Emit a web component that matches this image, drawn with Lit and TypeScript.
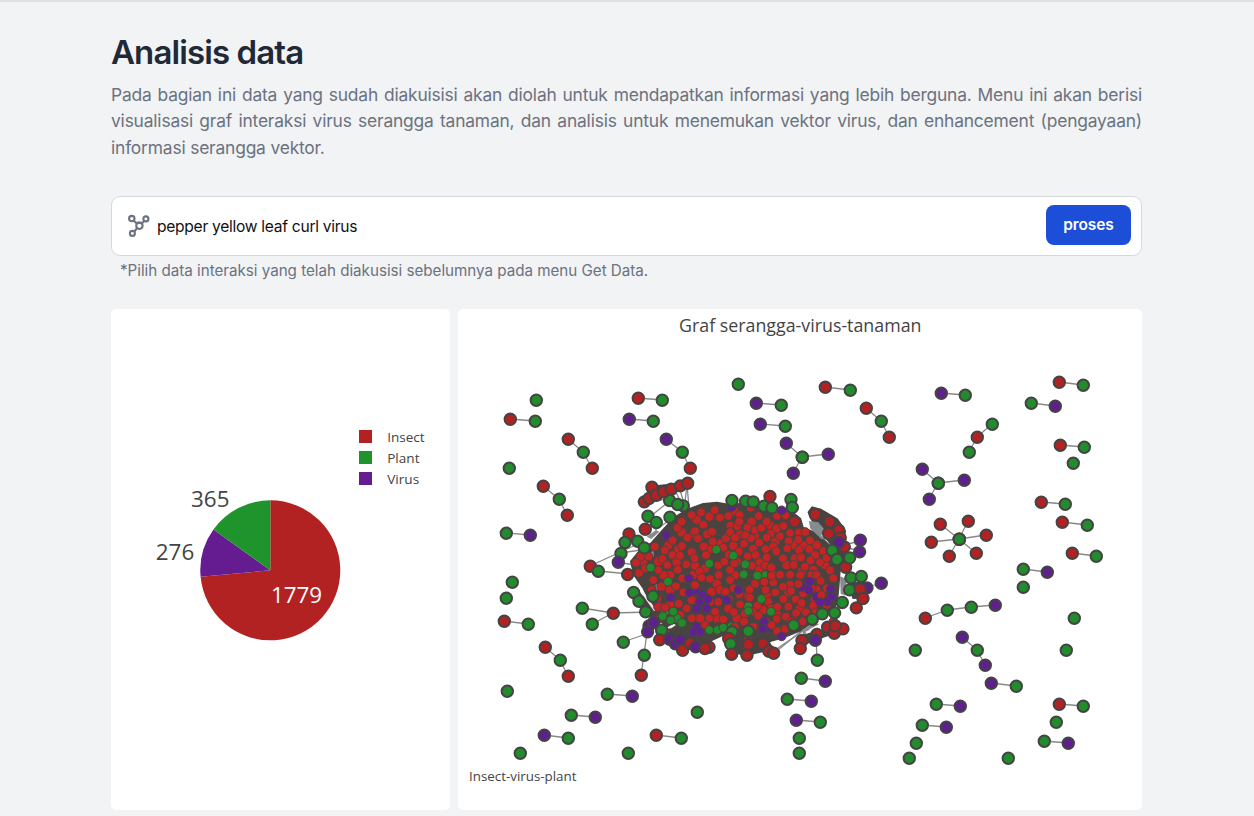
import { LitElement, html, css, svg } from "lit";
import { customElement } from "lit/decorators.js";

type Kind = "r" | "g" | "p";
type Node = [Kind, number, number];

const FILL: Record<Kind, string> = { r: "#b22222", g: "#228b2c", p: "#5f1f8c" };
const HUB_FILL: Record<Kind, string> = { r: "#c42424", g: "#228b2c", p: "#5f2190" };

/** "r510,419 g535,421" -> nodes */
const parse = (s: string): Node[] =>
  s.trim().split(/\s+/).map((t) => {
    const [x, y] = t.slice(1).split(",").map(Number);
    return [t[0] as Kind, x, y];
  });

// Small components; consecutive nodes are linked.
const CHAINS = [
  "g536,400", "r510,419 g535,421", "r568,439 g583,452 r592,468", "g509,468",
  "r543,486 g559,499 r567,515", "g506,533 p530,535", "g512,582", "g506,598",
  "r504,621 g528,624", "r545,647 g560,660 r568,676", "g507,691", "g607,694 p632,696",
  "g571,715 p595,717", "p544,735 g568,738", "g520,753", "g628,753", "g697,712",
  "r656,735 g681,738", "r638,398 g662,400", "p629,419 g653,421",
  "p666,439 g682,452 r690,468", "g738,384", "p756,403 g781,405", "p760,424 g785,426",
  "p786,443 g802,457 p828,454", "g802,457 p793,473", "r825,387 g850,390",
  "r866,408 g881,421 r889,437", "p941,393 g965,395", "r1059,382 g1083,385",
  "g1031,403 p1055,406", "g992,424 r977,437 g969,452", "r1060,445 g1084,447", "g1073,463",
  "p922,469 g938,483 p964,480", "g938,483 p929,499", "r1041,502 g1065,504",
  "r1062,522 g1087,525", "r940,524 g959,539 r976,553", "r968,521 g959,539 r949,556",
  "r931,542 g959,539 r986,535", "r1072,553 g1096,556", "g1023,569 p1047,572", "g1023,587",
  "r925,618 g947,610 g971,607 p995,605", "g1074,618", "g1066,650", "g915,650",
  "p962,637 g977,650 p985,665", "p991,683 g1016,686", "g936,704 p960,706",
  "g922,725 p946,727", "g916,743", "g909,758", "g1008,758", "r1059,704 g1083,706",
  "g1056,722", "g1044,741 p1068,743", "g801,678 p825,681", "g787,699 p811,701",
  "p796,720 g820,722", "g799,738", "g799,753",
].map(parse);

// Arms that reach out from the hub.
const ARM_LINKS: number[][] = [
  [590, 566, 640, 543], [598, 571, 640, 575], [582, 608, 613, 613], [592, 624, 613, 613],
  [613, 613, 650, 612], [623, 642, 652, 632], [647, 632, 644, 655], [644, 655, 641, 675],
  [816, 636, 817, 660], [840, 546, 860, 541], [840, 546, 860, 551], [881, 583, 858, 590],
  [620, 553, 655, 548], [618, 562, 650, 568], [651, 502, 670, 498], [675, 490, 683, 507],
  [680, 490, 686, 510], [687, 484, 684, 512], [687, 484, 690, 520], [773, 654, 805, 628],
  [778, 648, 812, 625], [666, 504, 652, 515], [670, 520, 655, 530],
];
const ARMS = parse("r590,566 g598,571 g582,608 g592,624 r613,613 g623,642 g644,655 r641,675 g817,660 p881,583");

// The hub is plotted on a grid three times finer than the page.
const HUB_BLOB =
  "M128,168 L165,128 L205,104 L250,88 L290,84 L335,92 L380,84 L440,98 L505,104 L540,132 L548,160 L590,176 L625,210 L640,240 L660,262 L654,340 L650,380 L640,402 L590,430 L540,466 L490,486 L440,500 L330,490 L310,478 L262,500 L215,496 L190,478 L150,470 L120,430 L98,410 L88,375 L72,340 L44,300 L34,260 L60,228 L95,205 Z";
const HUB_SHAPES = [
  "M567,112 L577,98 L600,104 L650,133 L674,168 L670,200 L678,235 L672,276 L650,270 L640,215 L612,178 L577,134 Z",
  "M26,350 L50,345 L98,404 L116,426 L80,420 Z",
  "M72,80 L95,36 L202,24 L150,50 L80,84 Z",
  "M694,330 L730,318 L735,366 L700,368 Z",
  "M535,516 L550,482 L670,454 L640,474 L580,494 Z",
  "M312,488 L440,490 L460,530 L440,525 L380,538 L330,530 Z",
  "M130,475 L262,475 L266,510 L187,524 Z",
];
const HUB_GAPS = [
  "M567,138 L595,142 L612,162 L604,182 L624,194 L604,192 L570,160 Z",
  "M80,185 L108,165 L118,170 L94,192 Z",
  "M660,304 L680,312 L676,362 L662,356 Z",
  "M545,465 L575,448 L600,446 L570,462 L552,482 Z",
  "M88,238 L100,226 L102,246 Z", "M106,330 L116,326 L118,345 L110,346 Z",
];
const HUB_WHITE = [
  "M62,352 L72,352 L108,405 L102,408 Z", "M134,462 L160,446 L168,450 L154,460 Z",
  "M556,470 L600,452 L590,462 L560,476 Z",
];

// Nodes mostly hidden beneath their neighbours.
const HUB_UNDER = parse(`
r230,135 r268,125 r345,110 r395,140 r450,150 r470,160 r262,178 r220,175 r185,172 r360,178 r405,185 r465,200
r300,205 r252,215 r215,232 r275,222 r340,212 r400,222 r460,215 r520,210 r550,212 r590,210 r145,212 r175,222
r170,262 r225,272 r255,280 r350,260 r420,262 r500,270 r525,250 r585,240 r580,285 r615,270 r545,290 r460,300
r435,300 r345,300 r290,325 r220,300 r150,300 r130,300 r115,260 r70,260 r62,245 r125,335 r150,345 r275,350
r300,345 r385,365 r440,362 r510,330 r550,355 r585,370 r590,345 r575,300 r505,352 r470,415 r430,405 r350,430
r290,430 r325,400 r310,370 r270,380 r215,375 r150,390 r115,395 r180,420 r240,430 r375,415 r520,440 r540,400
p262,372 p225,345 p300,375 p445,455 p545,335 p590,365 p460,395 g135,410 g335,455 g430,300 g170,430 g385,395`);

const HUB_DOTS = parse(`
r215,120 r243,112 r284,105 r325,123 r359,120 r392,98 r416,123 r471,122 r172,158 r250,149 r276,170
r300,128 r331,152 r352,154 r382,158 r405,165 r424,159 r452,176 r490,153 r497,121 r510,174 r537,172
r158,196 r202,188 r234,191 r278,200 r318,190 r330,171 r345,188 r372,206 r393,190 r418,203 r440,188
r480,184 r506,198 r535,194 r570,196 r556,171 r104,215 r134,226 r157,240 r186,213 r180,242 r224,250
r258,240 r310,218 r326,239 r357,229 r383,244 r407,240 r440,247 r437,222 r469,229 r489,250 r502,220
r537,225 r568,222 r610,228 r86,245 r48,263 r127,252 r142,270 r115,285 r173,284 r199,268 r239,290
r295,271 r313,260 r330,285 r343,265 r396,272 r417,285 r436,272 r454,278 r480,299 r510,299 r521,270
r555,275 r543,247 r571,256 r600,262 r620,248 r630,286 r590,300 r602,318 r640,310 r57,294 r100,315
r76,280 r168,334 r187,310 r245,308 r270,312 r296,300 r316,350 r341,340 r330,315 r358,358 r389,344
r405,326 r433,320 r437,345 r460,322 r466,352 r489,335 r490,372 r513,348 r527,373 r535,327 r541,300
r545,384 r605,360 r620,340 r95,345 r112,370 r135,397 r176,386 r190,352 r200,400 r225,330 r285,410
r295,381 r326,372 r341,411 r360,388 r372,440 r412,392 r398,410 r390,368 r445,380 r454,400 r472,396
r470,432 r497,425 r505,395 r528,414 r558,412 r580,392 r587,412 r310,433 r268,430 r415,422 r438,440
r400,455 r345,455 r472,468 r495,462 r512,440 r548,440 r120,430 r160,410 r215,430 r255,450 r385,490
r640,440 r620,390 r575,340 r455,450 r455,302 r375,180 r225,168 r185,140 r358,140 r440,140
g289,224 g340,242 g268,266 g376,268 g371,298 g412,302 g92,278 g144,320 g424,372 g453,410 g385,408
g160,410 g128,424 g152,436 g186,444 g292,465 g268,465 g310,458 g638,222
p138,180 p207,310 p208,353 p152,367 p245,358 p238,382 p260,400 p230,400 p320,375 p230,455 p240,470
p220,472 p432,440 p428,462 p485,484 p568,320 p566,345 p632,342 p635,365 p622,380 p600,382 p655,202
p335,96 p485,106 p355,345`);

const HUB_RIM = parse(`
r26,176 r75,162 g83,123 g108,142 g149,126 g189,92 g148,76 g172,88 r72,80 r95,36 r86,70 r108,60
r130,50 r153,42 r180,32 r202,24 g14,202 g52,198 g72,218 g2,235 p-6,261 r22,298 g40,352 g56,378
g76,410 g98,363 g335,76 g376,78 g399,80 g431,93 g455,98 r449,64 g512,73 g516,97 r523,140
r585,118 r628,140 r655,165 r625,175 r660,188 r672,215 p655,202 p720,195 p718,230 g636,226 g650,253
r676,276 g688,248 g692,308 g723,304 p740,338 g688,344 r720,342 r728,370 r708,398 g666,382
p86,452 p82,470 p100,442 g124,465 r118,494 p148,492 p165,506 p180,494 r187,525 r210,504 p226,515
r266,516 r254,520 g335,470 g384,468 g520,450 g576,432 g606,416 g643,413 r325,490 g331,506 r334,537
r384,508 r380,540 r428,506 r446,528 r460,534 r545,496 r540,520 r590,478 p585,495 r622,456 r642,474
r668,461 r645,452`);

const node = ([k, x, y]: Node) =>
  svg`<circle cx=${x + 0.3} cy=${y + 0.2} r="5.7" fill=${FILL[k]} stroke="#444" stroke-width="2"/>`;

const hubDot = (r: number) => ([k, x, y]: Node) =>
  svg`<circle cx=${x} cy=${y} r=${r} fill=${HUB_FILL[k]} stroke="#4a4441" stroke-width="3"/>`;

const TAU = Math.PI * 2;
const slice = (from: number, to: number, cx: number, cy: number, r: number) => {
  const at = (t: number) => `${cx + r * Math.sin(t * TAU)},${cy - r * Math.cos(t * TAU)}`;
  return `M${cx},${cy} L${at(from)} A${r},${r} 0 ${to - from > 0.5 ? 1 : 0} 1 ${at(to)} Z`;
};

@customElement("pie-chart")
class PieChart extends LitElement {
  static styles = css`
    :host { display: block; }
    svg { display: block; width: 100%; height: 100%; }
    text { font-family: "Open Sans", sans-serif; fill: #444; }
    .value { font-size: 22.4px; }
    .inside { fill: #fff; }
    .key { font-size: 13.4px; }
  `;
  render() {
    const total = 1779 + 365 + 276;
    const a = 1779 / total;
    const b = (1779 + 276) / total;
    const c = [270.3, 570.3, 70] as const;
    return html`<svg viewBox="111 309 339 501">
      <path d=${slice(0, a, ...c)} fill="#b22222"></path>
      <path d=${slice(a, b, ...c)} fill="#651c91"></path>
      <path d=${slice(b, 1, ...c)} fill="#20942c"></path>
      <text class="value" x="191" y="506.5" textLength="38.5">365</text>
      <text class="value" x="155.7" y="560" textLength="38.5">276</text>
      <text class="value inside" x="271" y="603" textLength="51">1779</text>
      <rect x="359" y="430" width="13" height="13" fill="#b22222"></rect>
      <rect x="359" y="451" width="13" height="13" fill="#20942c"></rect>
      <rect x="359" y="472" width="13" height="13" fill="#651c91"></rect>
      <text class="key" x="387.2" y="441.5" textLength="37.5" lengthAdjust="spacingAndGlyphs">Insect</text>
      <text class="key" x="387.2" y="462.5" textLength="32.3" lengthAdjust="spacingAndGlyphs">Plant</text>
      <text class="key" x="387.2" y="483.5" textLength="32" lengthAdjust="spacingAndGlyphs">Virus</text>
    </svg>`;
  }
}

@customElement("network-graph")
class NetworkGraph extends LitElement {
  static styles = css`
    :host { display: block; }
    svg { display: block; width: 100%; height: 100%; }
    text { font-family: "Open Sans", sans-serif; fill: #444; }
    .title { font-size: 18px; }
    .caption { font-size: 13.2px; }
    .link { stroke: #888; stroke-width: 1.3; }
    .mass { fill: #4a4441; stroke: #4a4441; stroke-width: 8; stroke-linejoin: round; }
  `;
  render() {
    const link = (x1: number, y1: number, x2: number, y2: number) =>
      svg`<line class="link" x1=${x1} y1=${y1} x2=${x2} y2=${y2}/>`;
    const finer = ([k, x, y]: Node): Node => [k, 620 + x / 3, 475 + y / 3];
    return html`<svg viewBox="458 309 684 501">
      <text class="title" x="679" y="331.5" textLength="242.5" lengthAdjust="spacingAndGlyphs">Graf serangga-virus-tanaman</text>
      ${CHAINS.map((c) => c.slice(1).map((n, i) => link(c[i][1], c[i][2], n[1], n[2])))}
      ${CHAINS.map((c) => c.map(node))}
      ${ARM_LINKS.map((l) => link(l[0], l[1], l[2], l[3]))}
      <g transform="translate(620 475) scale(.33333)">
        <path class="mass" d=${HUB_BLOB}></path>
        ${HUB_SHAPES.map((d) => svg`<path class="mass" d=${d}/>`)}
        ${HUB_GAPS.map((d) => svg`<path d=${d} fill="#888b8e"/>`)}
        ${HUB_WHITE.map((d) => svg`<path d=${d} fill="#eee"/>`)}
        ${HUB_UNDER.map(hubDot(14))}
        ${HUB_DOTS.map(hubDot(13))}
      </g>
      ${HUB_RIM.map((n) => node(finer(n)))}
      ${ARMS.map(node)}
      <text class="caption" x="469" y="781" textLength="107.5" lengthAdjust="spacingAndGlyphs">Insect-virus-plant</text>
    </svg>`;
  }
}

@customElement("app-root")
class AppRoot extends LitElement {
  static styles = css`
    :host {
      display: block;
      box-sizing: border-box;
      height: 816px;
      overflow: hidden;
      padding: 32px 112px 0 111px;
      border-top: 2px solid #dfe0e1;
      background: #f2f3f4;
      font-family: Inter, "Liberation Sans", sans-serif;
      color: #6b7280;
    }
    h1 { margin: 0; font-size: 33px; line-height: 36px; font-weight: 600; letter-spacing: -0.9px; color: #1f2937; }
    .intro { margin: 11.6px 0 0; font-size: 17.4px; line-height: 26.6px; letter-spacing: -0.18px; }
    .line { display: block; white-space: nowrap; text-align: justify; text-align-last: justify; }
    .line:last-child { text-align-last: left; }
    .search {
      display: flex; align-items: center; box-sizing: border-box; height: 60px; margin-top: 34.4px;
      padding: 0 10px 0 15px; border: 1px solid #d5d8dc; border-radius: 9px; background: #fff;
    }
    .search svg { width: 24px; height: 24px; }
    .query { flex: 1; padding: 1px 0 0 6px; font-size: 15.6px; letter-spacing: -0.29px; color: #111; }
    button {
      width: 85px; height: 40px; margin-bottom: 2px; padding: 0; border: 0; border-radius: 8px;
      background: #1d4ed8; color: #fff; font: 600 15.5px Inter, sans-serif; letter-spacing: -0.1px;
    }
    .note { margin: 5px 0 0 9px; font-size: 15.2px; line-height: 20px; white-space: nowrap; letter-spacing: -0.02px; }
    .charts { display: grid; grid-template-columns: 339px 1fr; gap: 8px; margin-top: 28px; height: 501px; }
    .card { background: #fff; border-radius: 5px; overflow: hidden; }
  `;
  render() {
    return html`
      <h1>Analisis data</h1>
      <p class="intro">
        <span class="line">Pada bagian ini data yang sudah diakuisisi akan diolah untuk mendapatkan informasi yang lebih berguna. Menu ini akan berisi</span>
        <span class="line">visualisasi graf interaksi virus serangga tanaman, dan analisis untuk menemukan vektor virus, dan enhancement (pengayaan)</span>
        <span class="line">informasi serangga vektor.</span>
      </p>
      <div class="search">
        <svg viewBox="0 0 24 24" fill="none" stroke="#6b7280" stroke-width="2.1">
          <circle cx="4.8" cy="4.6" r="2.7"></circle><circle cx="18.9" cy="4.9" r="2.5"></circle>
          <circle cx="12.4" cy="11.8" r="3.2"></circle><circle cx="5.4" cy="19.4" r="2.5"></circle>
          <path d="M6.6 6.6l2.2 2.2h6.8l1.6-2M10.2 14l-3 3.6"></path>
        </svg>
        <span class="query">pepper yellow leaf curl virus</span>
        <button>proses</button>
      </div>
      <p class="note">*Pilih data interaksi yang telah diakusisi sebelumnya pada menu Get Data.</p>
      <div class="charts">
        <pie-chart class="card"></pie-chart>
        <network-graph class="card"></network-graph>
      </div>
    `;
  }
}
